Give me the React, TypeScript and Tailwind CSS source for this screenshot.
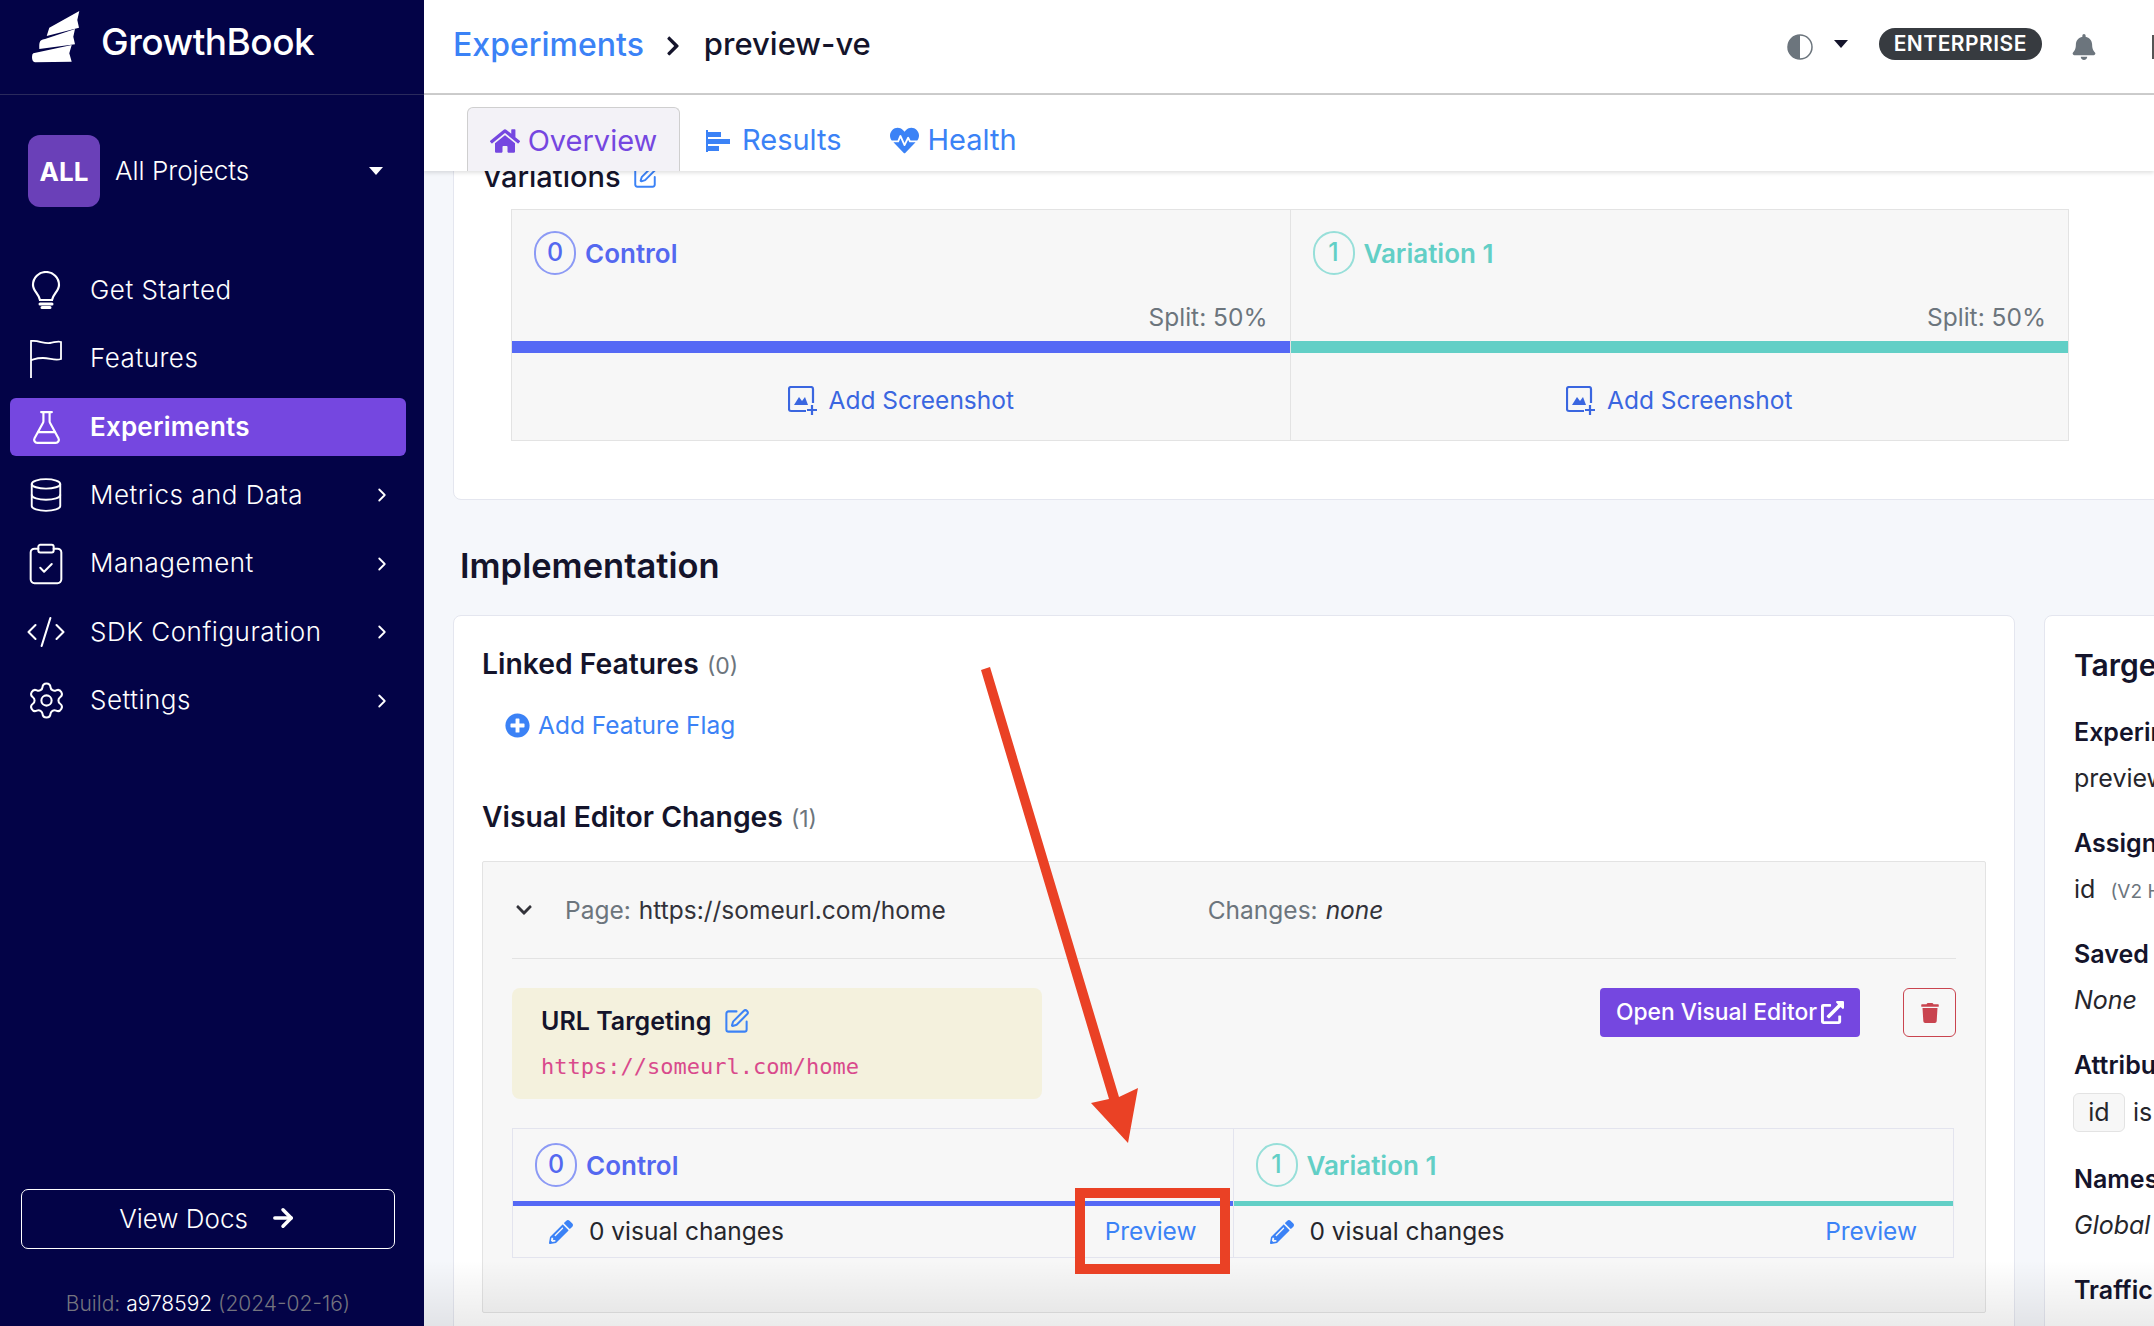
import {
  ChevronRight,
  Database,
  ClipboardCheck,
  CodeXml,
  Settings,
  FlaskConical,
  SquarePen,
  ArrowRight,
} from 'lucide-react';
import {
  FaHome,
  FaHeartbeat,
  FaPlusCircle,
  FaPencilAlt,
  FaTrash,
  FaExternalLinkAlt,
  FaBell,
  FaChevronDown,
  FaChevronRight,
} from 'react-icons/fa';

const navItems = [
  { label: 'Metrics and Data', icon: <Database size={38} strokeWidth={1.2} /> },
  { label: 'Management', icon: <ClipboardCheck size={46} strokeWidth={1.05} /> },
  { label: 'SDK Configuration', icon: <CodeXml size={42} strokeWidth={1.2} /> },
  { label: 'Settings', icon: <Settings size={41} strokeWidth={1.2} /> },
];

const variations = [
  { num: '0', name: 'Control', color: 'text-[#5468f0]', ring: 'border-[#8c9af5]', bar: 'bg-[#5569f5]' },
  { num: '1', name: 'Variation 1', color: 'text-[#62cfc6]', ring: 'border-[#97dfd9]', bar: 'bg-[#62cfc6]' },
];

function Logo() {
  return (
    <svg className="-mt-[11px]" width="48" height="52" viewBox="12 6 48 52" fill="white">
      <path d="M26.7 31 L29.3 22.7 L59.3 6 L57.3 15 L59 22.7 Z" />
      <path d="M20 36.7 Q20 35 25 34 L55 24 L53.3 31.7 L55 39.3 L19.3 44 Q19 38 20 36.7 Z" />
      <path d="M13.3 48.3 L51.7 40 L49.3 48.3 L51.7 56.7 L15 57.3 Q12 57 12 52 Q12 49 13.3 48.3 Z" />
    </svg>
  );
}

function Bulb() {
  return (
    <svg width="30" height="38" viewBox="0 0 30 38" fill="none" stroke="white" strokeWidth="2.2">
      <path d="M9 29 C8 23 2 20 2 14 A13 13 0 0 1 28 14 C28 20 22 23 21 29 Z" />
      <path d="M9 33 H21 M11 36.5 H19" strokeWidth="3" strokeLinecap="round" />
    </svg>
  );
}

function FlagIcon() {
  return (
    <svg width="32" height="38" viewBox="0 0 32 38" fill="none" stroke="white" strokeWidth="1.8">
      <path d="M1 38 V1 C8 0 14 4 20 3 S28 1 31 2 V19 C25 21 20 18 13 18 S5 19 1 20" />
    </svg>
  );
}

function BarsIcon() {
  return (
    <svg width="24" height="24" viewBox="0 0 24 24" fill="#3b82f6">
      <rect x="0" y="2" width="2" height="22" />
      <rect x="2" y="4" width="13" height="5" />
      <rect x="2" y="11" width="22" height="5" />
      <rect x="2" y="18" width="11" height="5" />
    </svg>
  );
}

function ScreenshotIcon() {
  return (
    <svg width="30" height="30" viewBox="0 0 30 30" fill="none" stroke="#3a66e0" strokeWidth="2.2">
      <path d="M18 25 H3 Q1 25 1 23 V3 Q1 1 3 1 H23 Q25 1 25 3 V17" />
      <path d="M6 19 L11 11 L14 15 L17 11 L20 19 Z" fill="#3a66e0" stroke="none" />
      <path d="M24 19 V29 M19 24 H29" />
    </svg>
  );
}

function HalfCircle() {
  return (
    <svg width="26" height="26" viewBox="0 0 26 26">
      <circle cx="13" cy="13" r="12" fill="white" stroke="#6c757d" strokeWidth="1.5" />
      <path d="M13 1 A12 12 0 0 0 13 25 Z" fill="#6c757d" />
    </svg>
  );
}

function Caret({ className }: { className: string }) {
  return <span className={`block w-0 h-0 border-x-[7px] border-x-transparent border-t-[8px] ${className}`} />;
}

function VariationLabel({ num, name, color, ring }: { num: string; name: string; color: string; ring: string }) {
  return (
    <div className={`flex items-center gap-[9px] ${color}`}>
      <span className={`flex w-[42px] h-[44px] items-center justify-center rounded-full border-2 text-[25px] font-medium ${ring}`}>{num}</span>
      <span className="text-[26px] font-semibold">{name}</span>
    </div>
  );
}

function TargetItem({ title, children }: { title: string; children?: React.ReactNode }) {
  return (
    <div className="h-[111px] whitespace-nowrap">
      <div className="text-[25px] leading-[30px] font-semibold text-[#14142b]">{title}</div>
      <div className="mt-[15px] text-[25px] leading-[32px] text-[#26262c]">{children}</div>
    </div>
  );
}

export default function App() {
  return (
    <div className="relative flex w-[2154px] h-[1326px] overflow-hidden bg-[#f5f7fb] font-['Inter',sans-serif] text-[#26262c]">
      {/* sidebar */}
      <aside className="flex w-[424px] shrink-0 flex-col bg-[#030347] text-white">
        <div className="flex h-[95px] items-center gap-[21px] border-b border-[#2a2a5c] pl-[32px] pb-[10px]">
          <Logo />
          <span className="text-[37px] font-medium tracking-[-0.5px]">GrowthBook</span>
        </div>
        <div className="mt-[40px] flex items-center pl-[28px] pr-[41px]">
          <span className="flex w-[72px] h-[72px] items-center justify-center rounded-[12px] bg-[#6a40b8] text-[26px] font-bold">ALL</span>
          <span className="ml-[15px] flex-1 -mt-[2px] text-[26px] font-light">All Projects</span>
          <Caret className="border-t-white" />
        </div>
        <nav className="mt-[49px] flex flex-col pl-[10px] pr-[18px] text-[26px] font-light tracking-[0.5px]">
          <a className="flex h-[68.5px] items-center">
            <span className="flex w-[72px] justify-center"><Bulb /></span>
            <span className="ml-[8px] -mt-[2px]">Get Started</span>
          </a>
          <a className="flex h-[68.5px] items-center">
            <span className="flex w-[72px] justify-center"><FlagIcon /></span>
            <span className="ml-[8px] -mt-[2px]">Features</span>
          </a>
          <a className="flex h-[58px] my-[5px] items-center rounded-[6px] bg-[#7547e0] font-semibold tracking-[0.2px]">
            <span className="flex w-[72px] justify-center"><FlaskConical size={37} strokeWidth={1.4} /></span>
            <span className="ml-[8px] -mt-[2px]">Experiments</span>
          </a>
          {navItems.map((item) => (
            <a key={item.label} className="flex h-[68.5px] items-center pr-[13px]">
              <span className="flex w-[72px] justify-center">{item.icon}</span>
              <span className="ml-[8px] -mt-[2px] flex-1">{item.label}</span>
              <ChevronRight size={22} strokeWidth={2} />
            </a>
          ))}
        </nav>
        <div className="mt-auto pl-[21px] pr-[29px]">
          <a className="flex h-[60px] items-center justify-center gap-[21px] rounded-[7px] border border-white pb-[2px] text-[26px] font-light">
            View Docs
            <ArrowRight size={28} strokeWidth={3} />
          </a>
        </div>
        <div className="mt-[42px] mb-[9px] pr-[8px] text-center text-[21px] leading-[26px] text-[#74747f] font-light">
          Build: <span className="text-white">a978592</span> (2024-02-16)
        </div>
      </aside>

      {/* main */}
      <main className="relative flex min-w-0 flex-1 flex-col">
        <header className="relative z-10 flex h-[95px] shrink-0 items-center border-b-2 border-[#cdcdcd] bg-white pl-[29px]">
          <span className="-mt-[4px] text-[32px] font-medium text-[#3b82f6]">Experiments</span>
          <FaChevronRight className="ml-[18px] -mt-[2px] text-[#14142b]" size={22} />
          <span className="-mt-[4px] ml-[20px] text-[31px] font-medium text-[#14142b]">preview-ve</span>
          <div className="ml-auto flex items-center">
            <HalfCircle />
            <Caret className="ml-[21px] -mt-[6px] border-t-[#14142b]" />
            <span className="ml-[31px] flex h-[32px] items-center rounded-full bg-[#373b40] px-[15px] text-[21px] font-semibold tracking-[0.5px] text-white -mt-[6px]">ENTERPRISE</span>
            <FaBell className="ml-[29px] text-[#6c757d]" size={26} />
            <span className="ml-[55px] block h-[24px] w-[2px] bg-[#555]" />
          </div>
        </header>
        <div className="relative z-10 flex h-[76px] shrink-0 items-end bg-white pl-[43px] text-[#3b82f6] shadow-[0_2px_4px_rgba(0,0,0,0.12)] text-[29px]">
          <a className="flex h-[64px] w-[213px] items-center justify-center gap-[8px] rounded-t-[6px] border border-b-0 border-[#cfcfcf] bg-[#f3f2f7] pt-[2px] text-[#7547e0]">
            <FaHome size={30} />
            Overview
          </a>
          <a className="ml-[26px] flex h-[64px] items-center gap-[12px] pt-[2px]">
            <BarsIcon />
            Results
          </a>
          <a className="ml-[48px] flex h-[64px] items-center gap-[9px] pt-[2px]">
            <FaHeartbeat size={29} />
            Health
          </a>
        </div>

        {/* scrolled content, the top card is partly under the tab bar */}
        <div className="min-h-0 flex-1 overflow-hidden pl-[29px]">
          <section className="-mt-[44px] h-[373px] w-[1800px] rounded-l-[8px] border border-[#e4e6ef] bg-white pl-[30px] pt-[31px]">
            <div className="-ml-[2px] flex items-center gap-[11px] text-[29px] leading-[36px] font-medium text-[#14142b]">
              Variations
              <SquarePen className="text-[#3b82f6]" size={26} strokeWidth={1.8} />
            </div>
            <div className="mt-[14px] ml-[27px] flex h-[232px] w-[1558px] border border-[#e3e3e3] bg-[#f7f7f7]">
              {variations.map((v, i) => (
                <div key={v.num} className={`flex flex-1 flex-col ${i === 0 ? 'border-r border-[#e3e3e3]' : ''}`}>
                  <div className="pl-[22px] pt-[21px]">
                    <VariationLabel num={v.num} name={v.name} color={v.color} ring={v.ring} />
                  </div>
                  <div className="mt-[27px] pr-[22px] text-right text-[24.5px] leading-[30px] text-[#6c757d]">Split: 50%</div>
                  <div className={`mt-[9px] h-[12px] ${v.bar}`} />
                  <div className="flex flex-1 items-center justify-center gap-[11px] pt-[8px] text-[24.5px] text-[#3a66e0]">
                    <ScreenshotIcon />
                    Add Screenshot
                  </div>
                </div>
              ))}
            </div>
          </section>

          <h2 className="ml-[7px] mt-[44px] text-[34.5px] leading-[44px] font-semibold text-[#14142b]">Implementation</h2>

          <div className="mt-[27px] flex gap-[29px]">
            <section className="h-[900px] w-[1562px] shrink-0 rounded-[8px] border border-[#e4e6ef] bg-white pl-[28px] pr-[28px] pt-[29px]">
              <div className="flex items-baseline gap-[8px] text-[28.3px] leading-[38px] font-semibold text-[#14142b]">
                Linked Features
                <span className="text-[23px] font-normal text-[#6c757d]">(0)</span>
              </div>
              <a className="ml-[23px] mt-[24px] flex items-center gap-[8px] text-[24.5px] leading-[32px] text-[#3b82f6]">
                <FaPlusCircle size={25} />
                Add Feature Flag
              </a>
              <div className="mt-[57px] flex items-baseline gap-[8px] text-[28.3px] leading-[38px] font-semibold text-[#14142b]">
                Visual Editor Changes
                <span className="text-[23px] font-normal text-[#6c757d]">(1)</span>
              </div>

              <div className="mt-[23px] h-[452px] rounded-[2px] border border-[#e3e3e3] bg-[#f7f7f7] px-[29px]">
                <div className="flex h-[97px] items-center border-b border-[#e3e3e3] text-[24.5px]">
                  <FaChevronDown className="ml-[3px] text-[#33333a]" size={18} />
                  <span className="ml-[32px] text-[#6c757d]">Page:</span>
                  <span className="ml-[8px] text-[#33333a]">https://someurl.com/home</span>
                  <span className="ml-[262px] text-[#6c757d]">Changes:</span>
                  <em className="ml-[8px] text-[#33333a]">none</em>
                </div>

                <div className="mt-[29px] flex items-start">
                  <div className="h-[111px] w-[530px] rounded-[8px] bg-[#f4f1dd] pl-[29px] pt-[17px]">
                    <div className="flex items-center gap-[12px] text-[25px] leading-[32px] font-semibold text-[#14142b]">
                      URL Targeting
                      <SquarePen className="text-[#3b82f6]" size={27} strokeWidth={1.8} />
                    </div>
                    <code className="mt-[16px] block text-[22px] leading-[28px] text-[#d94a8c] font-['DejaVu_Sans_Mono',monospace]">https://someurl.com/home</code>
                  </div>
                  <a className="ml-auto flex h-[49px] w-[260px] items-center justify-center gap-[4px] rounded-[4px] bg-[#7547e0] text-[22.8px] font-medium text-white">
                    Open Visual Editor
                    <FaExternalLinkAlt size={23} />
                  </a>
                  <a className="ml-[43px] flex h-[49px] w-[53px] items-center justify-center rounded-[6px] border border-[#c9444f] text-[#c9444f]">
                    <FaTrash size={20} />
                  </a>
                </div>

                <div className="mt-[29px] flex h-[130px] w-[1442px] border border-[#e3e4ee]">
                  {variations.map((v, i) => (
                    <div key={v.num} className={`flex min-w-0 flex-1 flex-col ${i === 0 ? 'border-r border-[#e3e4ee]' : ''}`}>
                      <div className="flex h-[72px] items-center pl-[22px]">
                        <VariationLabel num={v.num} name={v.name} color={v.color} ring={v.ring} />
                      </div>
                      <div className={`h-[5px] ${v.bar}`} />
                      <div className="flex flex-1 items-center pl-[36px] pr-[36px] text-[24.5px]">
                        <FaPencilAlt className="text-[#3b82f6]" size={24} />
                        <span className="ml-[16px] flex-1">0 visual changes</span>
                        <a className="text-[#3b82f6]">Preview</a>
                      </div>
                    </div>
                  ))}
                </div>
              </div>
            </section>

            <section className="h-[900px] w-[400px] shrink-0 rounded-[8px] border border-[#e4e6ef] bg-white pl-[29px] pt-[30px]">
              <div className="mb-[33px] text-[30px] leading-[38px] font-semibold text-[#14142b] whitespace-nowrap">Targeting</div>
              <TargetItem title="Experiment Key">preview-ve</TargetItem>
              <TargetItem title="Assignment Attribute">
                id <span className="ml-[8px] text-[19px] text-[#6c757d]">(V2 Hashing)</span>
              </TargetItem>
              <TargetItem title="Saved Groups"><em>None</em></TargetItem>
              <div className="h-[114px] whitespace-nowrap">
                <div className="text-[25px] leading-[30px] font-semibold text-[#14142b]">Attribute Targeting</div>
                <div className="mt-[13px] flex items-center text-[25px]">
                  <span className="-ml-[1px] flex h-[39px] w-[52px] items-center justify-center rounded-[6px] border border-[#e3e3e3] bg-[#f7f7f7]">id</span>
                  <span className="ml-[8px]">is not null</span>
                </div>
              </div>
              <TargetItem title="Namespace"><em>Global (all users)</em></TargetItem>
              <TargetItem title="Traffic" />
            </section>
          </div>
        </div>
      </main>

      {/* bottom fade over the page */}
      <div className="pointer-events-none absolute inset-x-0 bottom-0 ml-[424px] h-[66px] bg-gradient-to-b from-transparent to-[rgba(0,0,0,0.08)]" />

      {/* red annotation drawn on top of the screenshot */}
      <svg className="pointer-events-none absolute left-0 top-0" width="2154" height="1326" fill="none">
        <rect x="1080" y="1193" width="145" height="76" stroke="#ea4125" strokeWidth="10" />
        <path d="M981 670 L990 667 L1119 1097 L1138 1088 L1128 1143 L1091 1103 L1109 1099 Z" fill="#ea4125" />
      </svg>
    </div>
  );
}
